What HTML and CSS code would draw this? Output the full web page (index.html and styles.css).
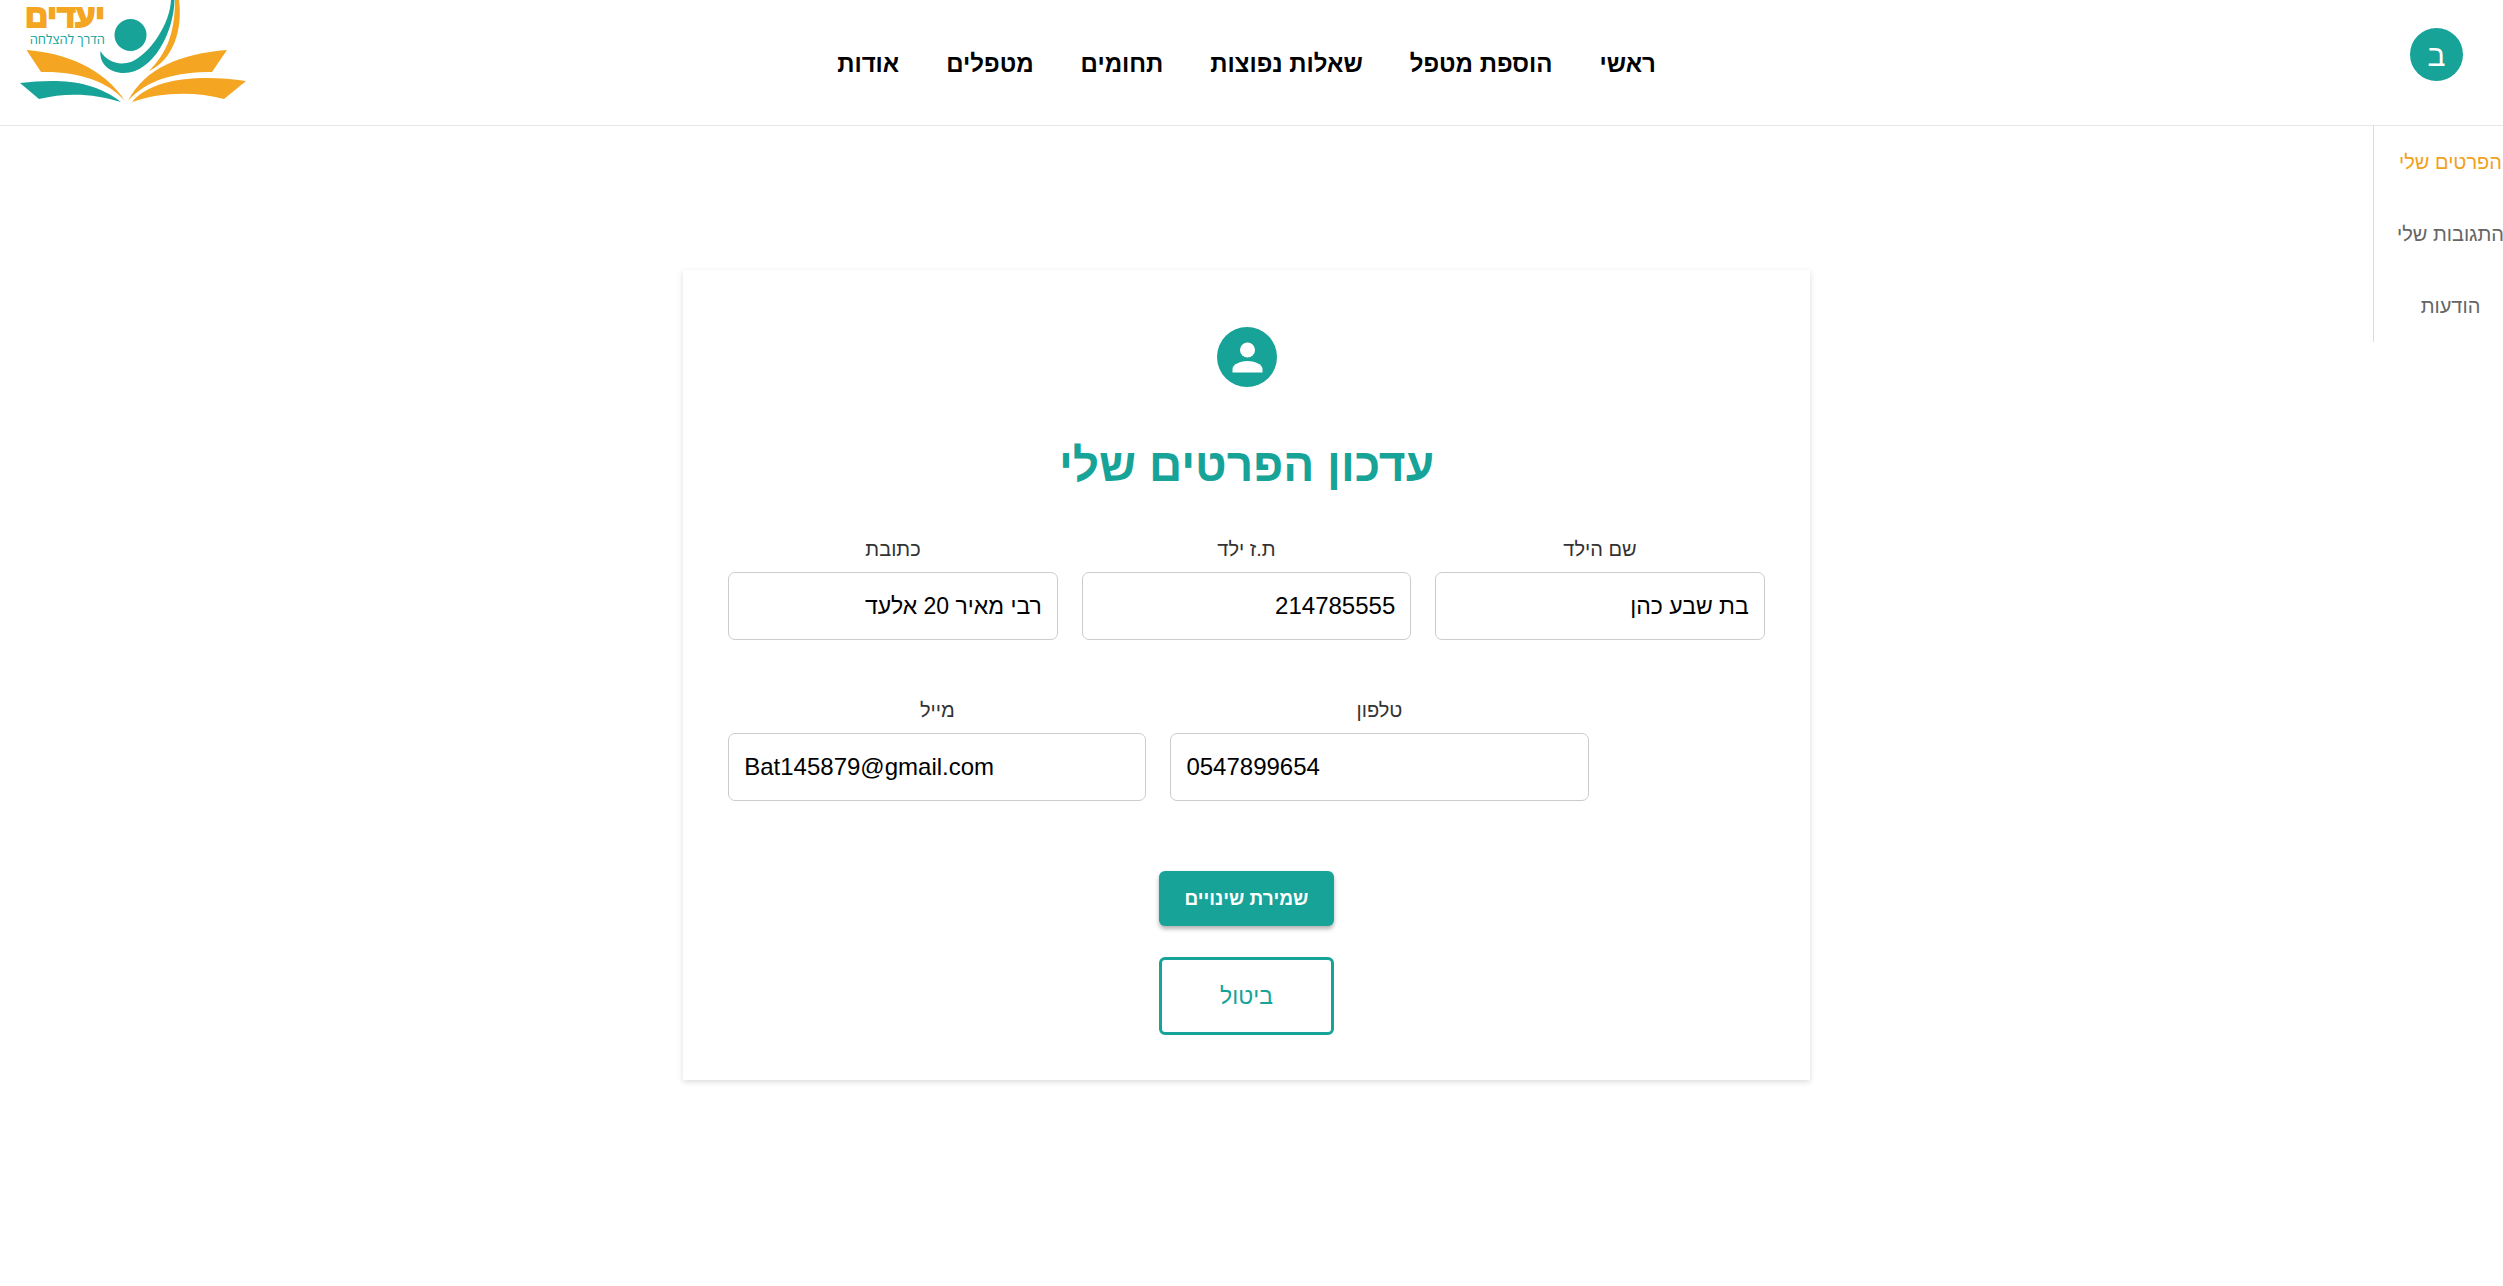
FILE: index.html
```html
<!DOCTYPE html>
<html lang="he" dir="rtl">
<head>
<meta charset="utf-8">
<meta name="viewport" content="width=device-width, initial-scale=1">
<title>יעדים - עדכון הפרטים שלי</title>
<link rel="stylesheet" href="styles.css">
</head>
<body>
<header class="header">
  <button class="user" type="button">ב</button>
  <nav class="nav">
    <a href="#">ראשי</a>
    <a href="#">הוספת מטפל</a>
    <a href="#">שאלות נפוצות</a>
    <a href="#">תחומים</a>
    <a href="#">מטפלים</a>
    <a href="#">אודות</a>
  </nav>
  <a class="logo" href="#" aria-label="יעדים">
    <svg width="228" height="104" viewBox="20 0 228 104">
      <g fill="#f4a522">
        <path d="M26.500 50C65 53 104 68 125 101C107 80 75 71 41 72Z"/>
        <path d="M227 50C180 54 145 68 128 101C147 79 177 72 212 72Z"/>
        <path d="M246 81C205 75 154 76 132 102C159 92 195 91 224 99Z"/>
        <path d="M175 0H179C183 30 173 60 149 71C166 54 175 34 175 0Z"/>
      </g>
      <g fill="#17a398">
        <circle cx="130.500" cy="35" r="16"/>
        <path d="M20 83C56 79 92 79 121 102C96 94 67 92 39 99Z"/>
        <path d="M171 0H174.500C174 32 153 73 124 73C109 73 99 63 100.500 51C106 61 118 66 131 62C150 54 170 24 171 0Z"/>
      </g>
      <text class="logo-name" x="105" y="27">יעדים</text>
      <text class="logo-tagline" x="105" y="44">הדרך להצלחה</text>
    </svg>
  </a>
</header>

<div class="page">
  <nav class="sidebar">
    <a class="active" href="#">הפרטים שלי</a>
    <a href="#">התגובות שלי</a>
    <a href="#">הודעות</a>
  </nav>

  <main class="card">
    <svg class="badge" viewBox="0 0 60 60" aria-hidden="true">
      <circle cx="30" cy="30" r="30" fill="#17a398"/>
      <circle cx="30.500" cy="23" r="7.500" fill="#fff"/>
      <path d="M15.500 45.500V42C15.500 37 24 34 30.500 34S45.500 37 45.500 42V45.500Z" fill="#fff"/>
    </svg>
    <h1>עדכון הפרטים שלי</h1>
    <form>
      <div class="row">
        <div class="field">
          <label for="name">שם הילד</label>
          <input class="hebrew" id="name" type="text" value="בת שבע כהן">
        </div>
        <div class="field">
          <label for="child-id">ת.ז ילד</label>
          <input id="child-id" type="text" value="214785555">
        </div>
        <div class="field">
          <label for="address">כתובת</label>
          <input class="hebrew" id="address" type="text" value="רבי מאיר 20 אלעד">
        </div>
      </div>
      <div class="row contact">
        <div class="field">
          <label for="phone">טלפון</label>
          <input id="phone" type="tel" dir="ltr" value="0547899654">
        </div>
        <div class="field">
          <label for="email">מייל</label>
          <input id="email" type="email" dir="ltr" value="Bat145879@gmail.com">
        </div>
      </div>
      <div class="actions">
        <button class="save" type="submit">שמירת שינויים</button>
        <button class="cancel" type="button">ביטול</button>
      </div>
    </form>
  </main>
</div>
</body>
</html>
```
FILE: styles.css
```css
* {
  box-sizing: border-box;
}

body {
  margin: 0;
  background: #fff;
  color: #000;
  font-family: "Liberation Sans", Arial, sans-serif;
  overflow-x: hidden;
}

a {
  color: inherit;
  text-decoration: none;
}

button,
input {
  font-family: inherit;
}

.header {
  display: grid;
  grid-template-columns: 1fr auto 1fr;
  align-items: start;
  height: 126px;
  padding: 0 30px 0 20px;
  border-bottom: 1px solid #e7e7e7;
}

.user {
  width: 53px;
  height: 53px;
  margin: 28px 10px 0 0;
  padding: 0;
  border: 0;
  border-radius: 50%;
  background: #17a398;
  color: #fff;
  font-size: 30px;
  line-height: 55px;
}

.nav {
  display: flex;
  gap: 47px;
  padding-top: 48px;
  font-size: 24px;
  font-weight: 700;
  line-height: 32px;
}

.logo {
  justify-self: end;
}

.logo svg {
  display: block;
}

.logo-name {
  fill: #f4a522;
  stroke: #f4a522;
  stroke-width: 2px;
  font-size: 32px;
  font-weight: 700;
}

.logo-tagline {
  fill: #17a398;
  font-family: "Open Sans", sans-serif;
  font-size: 13px;
}

.page {
  display: grid;
  grid-template-columns: 130px 1fr 120px;
  align-items: start;
}

.sidebar {
  border-left: 1px solid #dcdcdc;
  color: #666;
  font-size: 20px;
}

.sidebar a {
  display: flex;
  align-items: center;
  justify-content: center;
  height: 72px;
  padding-left: 24px;
  white-space: nowrap;
}

.sidebar .active {
  color: #f4a01c;
}

.card {
  justify-self: center;
  width: 50%;
  margin: 144px 0 40px;
  padding: 57px 45px 45px;
  box-shadow: 0 2px 6px rgba(0, 0, 0, 0.14);
  text-align: center;
}

.badge {
  display: block;
  width: 60px;
  margin: 0 auto;
}

h1 {
  margin: 48px 0 39px;
  color: #17a398;
  font-size: 46px;
  line-height: 60px;
}

.row {
  display: grid;
  grid-template-columns: repeat(3, 1fr);
  gap: 24px;
}

.contact {
  grid-template-columns: repeat(2, 1fr);
  margin-top: 55px;
  padding-right: 17%;
}

.field {
  display: grid;
  gap: 8px;
}

.field label {
  color: #333;
  font-size: 20px;
  line-height: 30px;
}

.field input {
  width: 100%;
  height: 68px;
  padding: 0 15px;
  border: 1px solid #ccc;
  border-radius: 7px;
  background: #fff;
  color: #000;
  font-size: 24px;
}

.field .hebrew {
  font-size: 23px;
}

.actions {
  display: grid;
  justify-items: center;
  gap: 31px;
  margin-top: 70px;
}

.actions button {
  width: 175px;
  border-radius: 6px;
}

.save {
  height: 55px;
  border: 0;
  background: #17a398;
  box-shadow: 0 3px 4px rgba(0, 0, 0, 0.3);
  color: #fff;
  font-size: 19px;
  font-weight: 700;
}

.cancel {
  height: 78px;
  border: 3px solid #17a398;
  background: #fff;
  color: #17a398;
  font-size: 23px;
}
```
